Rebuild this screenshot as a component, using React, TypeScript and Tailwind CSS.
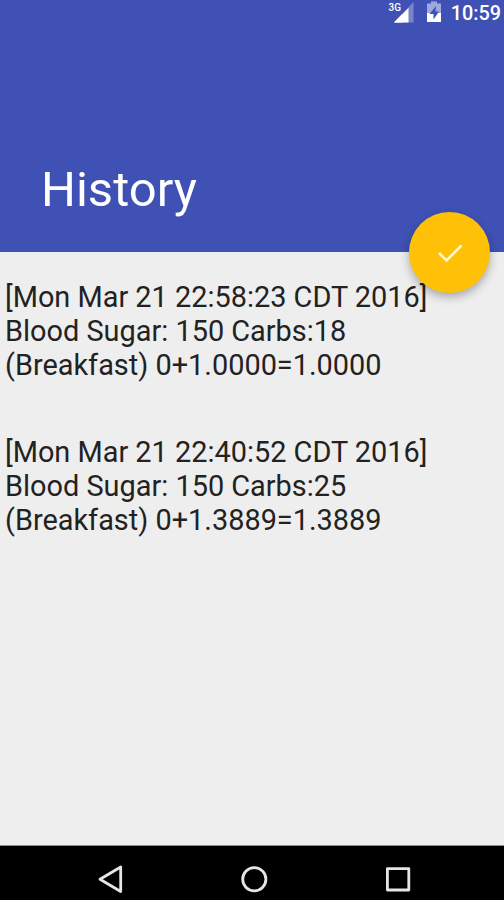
const entries = [
  { id: 1, lines: ["[Mon Mar 21 22:58:23 CDT 2016]", "Blood Sugar: 150 Carbs:18", "(Breakfast) 0+1.0000=1.0000"] },
  { id: 2, lines: ["[Mon Mar 21 22:40:52 CDT 2016]", "Blood Sugar: 150 Carbs:25", "(Breakfast) 0+1.3889=1.3889"] },
];

export default function App() {
  return (
    <div className="flex h-[900px] w-[504px] flex-col overflow-hidden bg-[#eeeeee] font-['Roboto',sans-serif]">
      <header className="relative flex h-[252px] shrink-0 flex-col justify-between bg-[#3f51b5] text-white">
        <div className="flex h-[26px] items-center justify-end pr-[3px]">
          <svg className="mr-[11px] h-[26px] w-[28px]" viewBox="0 0 28 26">
            <path d="M26.500 2v20.500H7z" fill="#7985cb" />
            <path d="M21.500 8v14.500H7z" fill="#fff" />
            <path d="M0 0h15v12L9 18H0z" fill="#3f51b5" />
            <path d="M15 14.200v8.300H7z" fill="#fff" />
            <text x="1.500" y="11" fontSize="11.500" fontWeight="500" textLength="12.500" lengthAdjust="spacingAndGlyphs" fill="#fff">3G</text>
          </svg>
          <svg className="mr-[9px] h-[26px] w-[16px]" viewBox="0 0 16 26">
            <path d="M1 3.500h4V1.500h6v2h4V13H1z" fill="#a0a8db" />
            <path d="M1 13h14v9H1z" fill="#fff" />
            <path d="M10 6 3.500 14h4v5.500l5.500-8H9.500z" fill="#3f51b5" />
          </svg>
          <span className="pt-[2px] text-[19.8px] leading-[26px] font-medium">10:59</span>
        </div>
        <h1 className="mb-[34px] ml-[41px] text-[49px] leading-[56px]">History</h1>
        <button className="absolute top-[212px] right-[14px] flex size-[81px] items-center justify-center rounded-full bg-[#ffc107] shadow-[0_4px_10px_rgba(0,0,0,0.3)]">
          <svg className="size-[32px]" viewBox="0 0 32 32" fill="none" stroke="#fff8e1" strokeWidth="2.5"><path d="m5 16 7.500 7.500L27.500 8.500" /></svg>
        </button>
      </header>
      <main className="flex grow flex-col gap-[53px] pt-[28px] pl-[5px] text-[28.9px] leading-[34px] text-[#222]">
        {entries.map((e) => (
          <div key={e.id}>{e.lines.map((l) => <p key={l} className="w-max">{l}</p>)}</div>
        ))}
      </main>
      <nav className="flex h-[55px] shrink-0 justify-center border-t border-[#8a8a8a] bg-black">
        <svg className="h-[54px] w-[504px]" viewBox="0 846 504 54" fill="none" stroke="#e6e6e6" strokeWidth="2.8" strokeLinejoin="round">
          <path d="M120.700 867v24.500L100 879.250z" />
          <circle cx="254.300" cy="879.300" r="11.600" />
          <rect x="387.400" y="868.600" width="21.400" height="21.400" />
        </svg>
      </nav>
    </div>
  );
}
